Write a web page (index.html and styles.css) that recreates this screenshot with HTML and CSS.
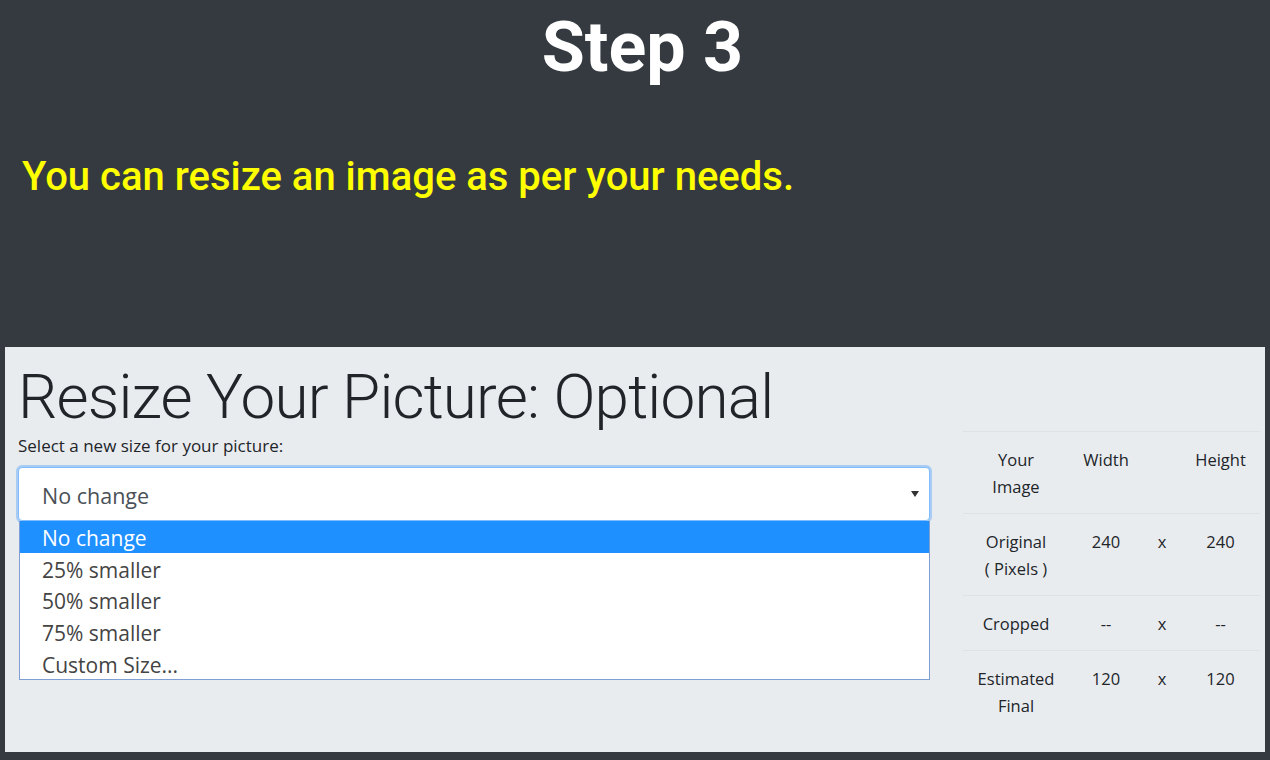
FILE: index.html
```html
<!DOCTYPE html>
<html lang="en">
<head>
<meta charset="utf-8">
<title>Step 3</title>
<link rel="stylesheet" href="styles.css">
</head>
<body>
<section class="intro">
  <h1 class="step-title">Step 3</h1>
  <p class="step-note">You can resize an image as per your needs.</p>
</section>
<section class="panel">
  <div class="panel-main">
    <h2 class="panel-title">Resize Your Picture: Optional</h2>
    <label class="field-label">Select a new size for your picture:</label>
    <div class="select-box">
      <span class="select-value">No change</span>
      <svg class="select-arrow" width="8" height="6" viewBox="0 0 8 6"><path d="M0 0H8L4 6Z" fill="#333"/></svg>
    </div>
    <ul class="select-list">
      <li class="option selected">No change</li>
      <li class="option">25% smaller</li>
      <li class="option">50% smaller</li>
      <li class="option">75% smaller</li>
      <li class="option">Custom Size...</li>
    </ul>
  </div>
  <div class="panel-side">
    <table class="size-table">
      <colgroup>
        <col class="c1"><col class="c2"><col class="c3"><col class="c4">
      </colgroup>
      <tr><td>Your<br>Image</td><td>Width</td><td></td><td>Height</td></tr>
      <tr><td>Original<br>( Pixels )</td><td>240</td><td>x</td><td>240</td></tr>
      <tr><td>Cropped</td><td>--</td><td>x</td><td>--</td></tr>
      <tr><td>Estimated<br>Final</td><td>120</td><td>x</td><td>120</td></tr>
    </table>
  </div>
</section>
</body>
</html>
```
FILE: styles.css
```css
* { box-sizing: border-box; }
html, body { margin: 0; padding: 0; }
body {
  background: #343a40;
  width: 1270px;
  height: 760px;
  overflow: hidden;
  font-family: "Open Sans", "Noto Sans", sans-serif;
}
.intro {
  height: 347px;
  padding-top: 12px;
}
.step-title {
  margin: 0;
  font-family: Roboto, sans-serif;
  font-weight: 700;
  font-size: 70px;
  line-height: 1;
  color: #ffffff;
  text-align: center;
  padding-left: 15px;
}
.step-note {
  margin: 75px 0 0 0;
  padding-left: 22px;
  font-family: Roboto, sans-serif;
  font-weight: 500;
  font-size: 40px;
  line-height: 1;
  color: #ffff00;
}
.panel {
  margin: 0 5px;
  height: 405px;
  background: #e9ecef;
  display: flex;
  gap: 33px;
  padding: 13.5px 5px 0 13px;
  color: #212529;
}
.panel-main { width: 912px; }
.panel-title {
  margin: 0;
  font-family: Roboto, sans-serif;
  font-weight: 300;
  font-size: 62px;
  letter-spacing: -0.8px;
  line-height: 72px;
  color: #212529;
  white-space: nowrap;
}
.field-label {
  display: block;
  font-size: 17px;
  line-height: 25.5px;
  color: #212529;
}
.select-box {
  margin-top: 9px;
  height: 54px;
  background: #fff;
  border: 1px solid #80bdff;
  border-radius: 4px;
  box-shadow: 0 0 0 2px rgba(0, 123, 255, 0.28);
  display: flex;
  align-items: center;
  justify-content: space-between;
  padding: 3px 10px 0 23px;
  color: #495057;
  font-size: 21.5px;
}
.select-arrow { margin-top: -3px; }
.select-list {
  list-style: none;
  margin: 0 0 0 1px;
  padding: 0;
  background: #fff;
  border: 1px solid #7f9fd4;
  border-top: none;
}
.option {
  height: 31.6px;
  display: flex;
  align-items: center;
  padding: 3px 0 0 22px;
  font-size: 21px;
  color: #444;
}
.option.selected {
  background: #1e90ff;
  color: #fff;
}
.panel-side {
  width: 297px;
  padding-top: 70.5px;
}
.size-table {
  width: 297px;
  border-collapse: collapse;
  table-layout: fixed;
  font-size: 16.5px;
  line-height: 27px;
  color: #212529;
}
.c1 { width: 106px; }
.c2 { width: 74px; }
.c3 { width: 38px; }
.c4 { width: 79px; }
.size-table td {
  border-top: 1px solid #dee2e6;
  padding: 13.5px 0;
  text-align: center;
  vertical-align: top;
}
```
